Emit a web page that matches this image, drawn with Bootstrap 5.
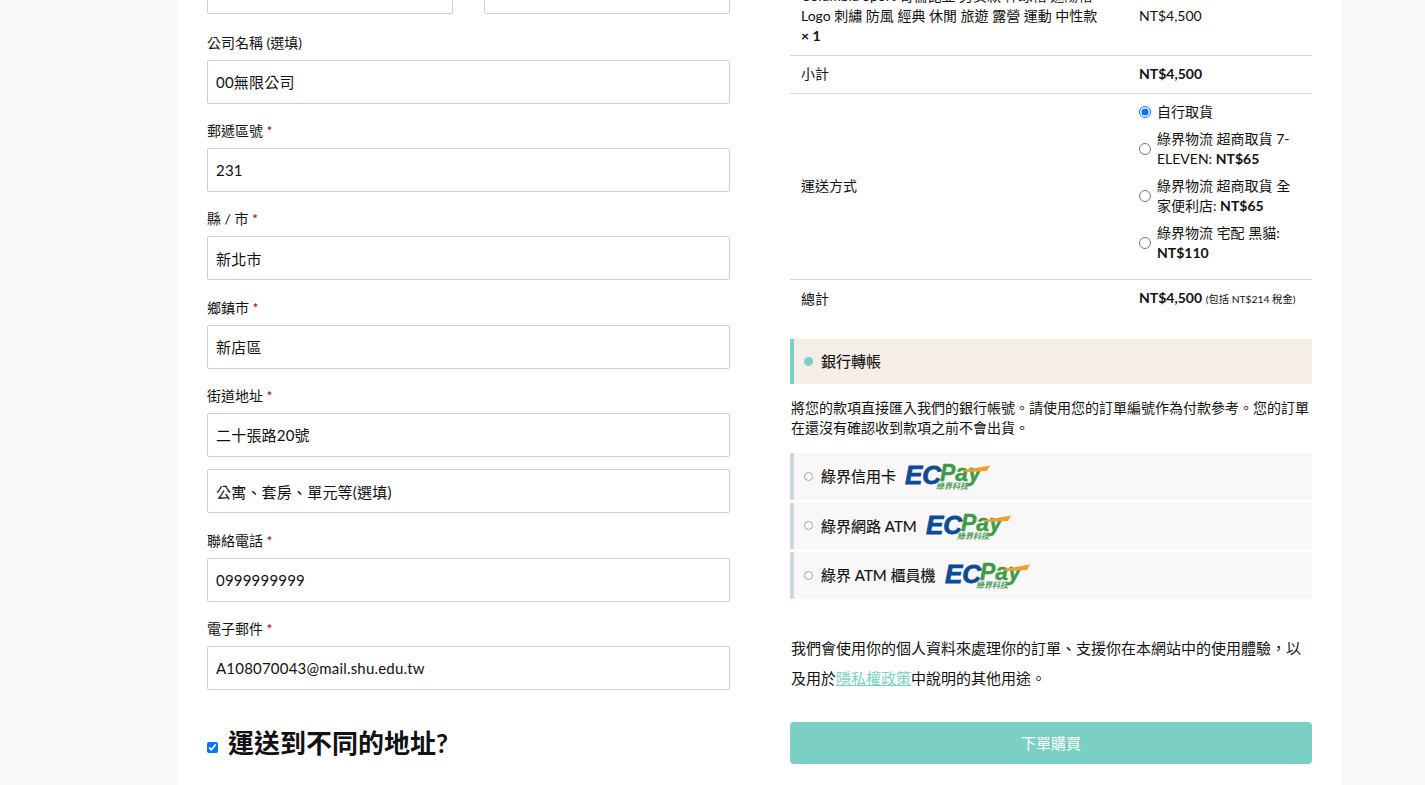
<!DOCTYPE html>
<html lang="zh-Hant">
<head>
<meta charset="utf-8">
<title>結帳</title>
<link href="https://cdn.jsdelivr.net/npm/bootstrap@5.3.0/dist/css/bootstrap.min.css" rel="stylesheet">
<style>
html,body{height:785px;overflow:hidden}
body{background:#f9f7f8;font-family:Lato,"Noto Sans CJK TC",sans-serif;color:#111;font-size:14px}
.sheet{width:1165px;height:785px;margin-left:177px;background:#fff;padding:0 30px;overflow:hidden;display:flex;gap:60px}
.leftcol{width:523px;flex:none;margin-top:-30px}
.rightcol{width:522px;flex:none;margin-top:-14px}
.twoup{display:flex;gap:31px;margin-bottom:17.9px}
.twoup .form-control{flex:1;min-width:0}
.fld{margin-bottom:16.25px}
.fld label{display:block;line-height:21px;font-size:14px;margin-bottom:7px;color:#111}
.req{color:#b00020}
.form-control.ipt{height:44px;border:1px solid #ccd0d4;border-radius:2px;padding:0 8px;font:15px/42px Lato,"Noto Sans CJK TC",sans-serif;color:#111;letter-spacing:.2px;box-shadow:none}
.extra{margin-top:12.5px}
.shiphead{display:flex;align-items:center;margin-top:35px;gap:10px}
.shiphead input{width:11px;height:11px;margin:9px 0 0;flex:none}
.shiphead h3{font-size:26px;font-weight:700;margin:0;line-height:36px;color:#111}
.ordertbl{width:100%;border-collapse:collapse;color:#111}
.ordertbl td{padding:8px 11px 9px;vertical-align:middle;line-height:20px;border-top:1px solid #d8d8d8}
.ordertbl tr:first-child td{border-top:0;vertical-align:top;padding:0 11px 9px}
.ordertbl .c1{width:338px}
.ordertbl .last td{padding:8px 11px 10px;white-space:nowrap}
.ship{list-style:none;margin:0 0 7px;padding:0}
.ship li{display:flex;align-items:center;gap:6px;margin:0 0 7px;line-height:20px}
.ship li:last-child{margin-bottom:0}
.ship input{width:12px;height:12px;margin:0;flex:none}
.taxnote{font-size:10.3px}
.paybox{display:flex;align-items:center;border-left:4px solid #ced6e2;background:#f9f7f8;padding:0 0 0 10px;gap:8px;color:#111;font-size:15px;font-weight:400;-webkit-text-stroke:.15px #111;margin-bottom:3px}
.paybox.on{border-left-color:#7bcfc3;background:#f5ede7;height:45px;margin-top:20px;margin-bottom:0}
.paybox.off{height:46.5px}
.dotmark{width:9px;height:9px;border-radius:50%;flex:none}
.dotmark.fill{background:#7bcfc3}
.dotmark.ring{background:#fff;border:1px solid #a2a2a2}
.banktext{margin:14px 0 15px;line-height:20px;color:#111;padding-left:1px}
.ecl{display:block;flex:none;margin-left:1px;-webkit-text-stroke:0}
.ecl text{font-family:"Liberation Sans",sans-serif;font-style:italic;font-weight:700}
.ecl .cjk{font-family:"Noto Sans CJK TC",sans-serif;font-size:8px}
.privacy{margin:34px 0 29.5px;line-height:30px;color:#111;font-size:15px;padding-left:1px}
.privacy a{color:#7bcfc3}
.btn.placebtn{display:block;width:100%;height:42px;background:#7bcfc3;border:0;border-radius:4px;color:#fff;font-size:15px}
</style>
</head>
<body>
<div class="sheet">
  <form class="leftcol">
    <div class="twoup">
      <input class="form-control ipt" aria-label="姓氏"><input class="form-control ipt" aria-label="名字">
    </div>
    <div class="fld"><label>公司名稱 (選填)</label><input class="form-control ipt" value="00無限公司"></div>
    <div class="fld"><label>郵遞區號 <span class="req">*</span></label><input class="form-control ipt" value="231"></div>
    <div class="fld"><label>縣 / 市 <span class="req">*</span></label><input class="form-control ipt" value="新北市"></div>
    <div class="fld"><label>鄉鎮市 <span class="req">*</span></label><input class="form-control ipt" value="新店區"></div>
    <div class="fld"><label>街道地址 <span class="req">*</span></label><input class="form-control ipt" value="二十張路20號"><input class="form-control ipt extra" value="公寓、套房、單元等(選填)"></div>
    <div class="fld"><label>聯絡電話 <span class="req">*</span></label><input class="form-control ipt" value="0999999999"></div>
    <div class="fld"><label>電子郵件 <span class="req">*</span></label><input class="form-control ipt" value="A108070043@mail.shu.edu.tw"></div>
    <div class="shiphead"><input type="checkbox" checked aria-label="運送到不同的地址"><h3>運送到不同的地址?</h3></div>
  </form>
  <div class="rightcol">
    <table class="ordertbl">
      <tr><td class="c1">Columbia Sport 哥倫比亞 男女款 棒球帽 遮陽帽<br>Logo 刺繡 防風 經典 休閒 旅遊 露營 運動 中性款<br><strong>× 1</strong></td><td class="c2"><br>NT$4,500</td></tr>
      <tr><td class="c1">小計</td><td class="c2"><strong>NT$4,500</strong></td></tr>
      <tr><td class="c1">運送方式</td><td class="c2">
        <ul class="ship">
          <li><input type="radio" name="s" checked aria-label="自行取貨"><span>自行取貨</span></li>
          <li><input type="radio" name="s" aria-label="7-ELEVEN"><span>綠界物流 超商取貨 7-ELEVEN: <strong>NT$65</strong></span></li>
          <li><input type="radio" name="s" aria-label="全家"><span>綠界物流 超商取貨 全家便利店: <strong>NT$65</strong></span></li>
          <li><input type="radio" name="s" aria-label="黑貓"><span>綠界物流 宅配 黑貓: <strong>NT$110</strong></span></li>
        </ul></td></tr>
      <tr class="last"><td class="c1">總計</td><td class="c2"><strong>NT$4,500</strong> <span class="taxnote">(包括 NT$214 稅金)</span></td></tr>
    </table>
    <div class="paybox on"><span class="dotmark fill"></span><span>銀行轉帳</span></div>
    <p class="banktext">將您的款項直接匯入我們的銀行帳號。請使用您的訂單編號作為付款參考。您的訂單在還沒有確認收到款項之前不會出貨。</p>
    <div class="paybox off"><span class="dotmark ring"></span><span>綠界信用卡</span>
      <svg class="ecl" width="86" height="30" viewBox="0 -1.5 86 30"><text x="35" y="18.5" font-size="23" fill="#3f9a45" stroke="#3f9a45" stroke-width=".4">Pay</text><text x="0" y="21" font-size="26" fill="#0d4a98" stroke="#0d4a98" stroke-width=".8">EC</text><path d="M56 8 L85 3 L82 8.5 L62 9.5Z" fill="#f0a030"/><text class="cjk" x="31" y="26.5" fill="#4f9e58">綠界科技</text></svg></div>
    <div class="paybox off"><span class="dotmark ring"></span><span>綠界網路 ATM</span>
      <svg class="ecl" width="86" height="30" viewBox="0 -1.5 86 30"><text x="35" y="18.5" font-size="23" fill="#3f9a45" stroke="#3f9a45" stroke-width=".4">Pay</text><text x="0" y="21" font-size="26" fill="#0d4a98" stroke="#0d4a98" stroke-width=".8">EC</text><path d="M56 8 L85 3 L82 8.5 L62 9.5Z" fill="#f0a030"/><text class="cjk" x="31" y="26.5" fill="#4f9e58">綠界科技</text></svg></div>
    <div class="paybox off"><span class="dotmark ring"></span><span>綠界 ATM 櫃員機</span>
      <svg class="ecl" width="86" height="30" viewBox="0 -1.5 86 30"><text x="35" y="18.5" font-size="23" fill="#3f9a45" stroke="#3f9a45" stroke-width=".4">Pay</text><text x="0" y="21" font-size="26" fill="#0d4a98" stroke="#0d4a98" stroke-width=".8">EC</text><path d="M56 8 L85 3 L82 8.5 L62 9.5Z" fill="#f0a030"/><text class="cjk" x="31" y="26.5" fill="#4f9e58">綠界科技</text></svg></div>
    <p class="privacy">我們會使用你的個人資料來處理你的訂單、支援你在本網站中的使用體驗，以及用於<a href="#">隱私權政策</a>中說明的其他用途。</p>
    <button type="button" class="btn placebtn">下單購買</button>
  </div>
</div>
</body>
</html>
